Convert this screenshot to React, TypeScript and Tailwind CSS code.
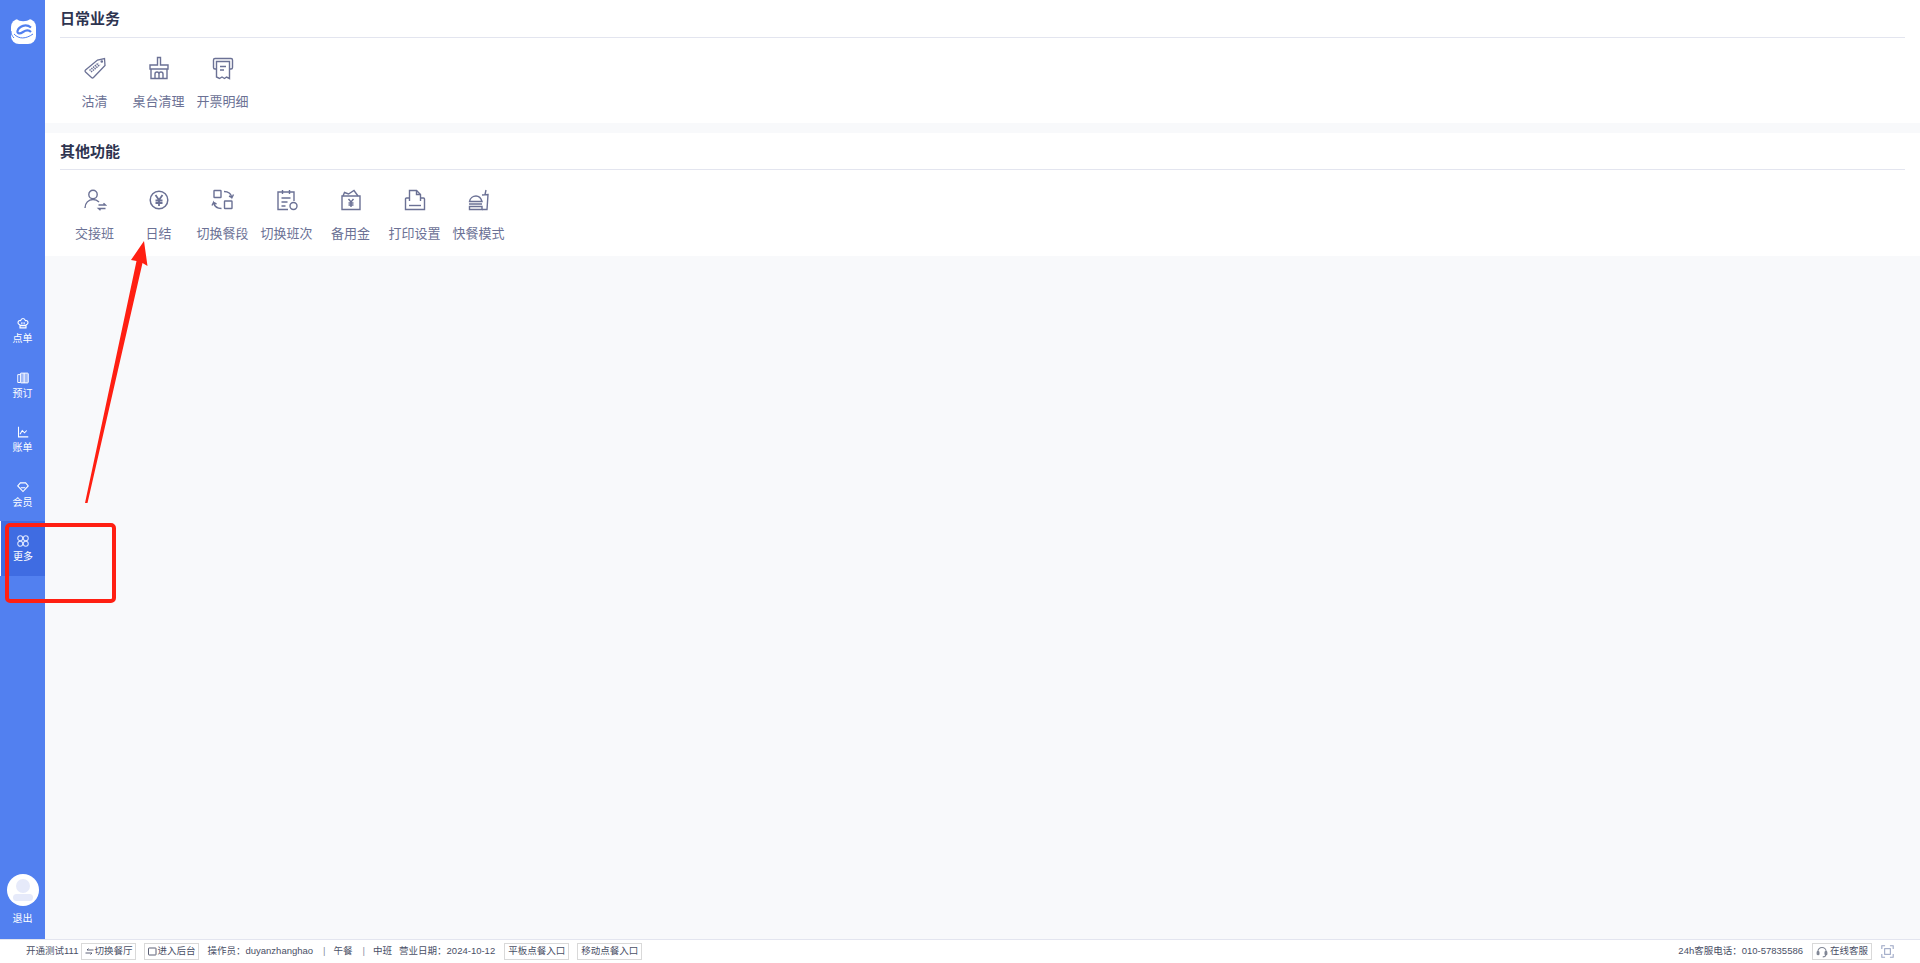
import type { ReactNode } from "react";

const font = "font-['Liberation_Sans','Noto_Sans_CJK_SC',sans-serif]";

function TagIcon() {
  return (
    <svg viewBox="0 0 24 24" className="h-6 w-6" fill="none" stroke="#6b7195" strokeWidth="1.3">
      <path d="M2.5 14 14.500 4l7-1.500.5 7L10.500 21.500a1.500 1.500 0 0 1-2 0l-6-5.500a1.300 1.300 0 0 1 0-2Z" />
      <path d="m6.500 14.500 9-7.500M8 16l9-7.500" strokeWidth="1.500" strokeDasharray="1.500 0.800" />
      <circle cx="18.800" cy="5.500" r="0.700" />
    </svg>
  );
}

function BroomIcon() {
  return (
    <svg viewBox="0 0 24 24" className="h-6 w-6" fill="none" stroke="#6b7195" strokeWidth="1.400">
      <path d="M10.500 1.500h3V9h7.500v4H3V9h7.500Z" />
      <path d="M4 13v9.500h16V13" />
      <path d="M8 22.500v-4.500a2 2 0 0 1 4 0v4.500M12 22.500v-4.500a2 2 0 0 1 4 0v4.500" />
    </svg>
  );
}

function ReceiptIcon() {
  return (
    <svg viewBox="0 0 24 24" className="h-6 w-6" fill="none" stroke="#6b7195" strokeWidth="1.400">
      <path d="M5.500 13H4a1.500 1.500 0 0 1-1.500-1.500V4A1.500 1.500 0 0 1 4 2.500h16A1.500 1.500 0 0 1 21.500 4v7.500A1.500 1.500 0 0 1 20 13h-1.500" />
      <path d="M5.500 5.500h13v17l-3-1.500-2 1.500-2.500-1.500-2.500 1.500-3-1.500Z" />
      <path d="M9 10.500h6M9 14h4" />
    </svg>
  );
}

function HandoverIcon() {
  return (
    <svg viewBox="0 0 24 24" className="h-6 w-6" fill="none" stroke="#6b7195" strokeWidth="1.400">
      <circle cx="10" cy="6.500" r="4.200" />
      <path d="M2 20c0-5 3.500-8.500 8-8.500 2.500 0 4.500 1 6 2.500" />
      <path d="M15.500 17h7l-2-1.800M22.500 20.500h-7l2 1.800" />
    </svg>
  );
}

function YenIcon() {
  return (
    <svg viewBox="0 0 24 24" className="h-6 w-6" fill="none" stroke="#6b7195" strokeWidth="1.500">
      <circle cx="12" cy="12" r="8.800" />
      <path d="m8.500 7 3.500 5 3.500-5M12 12v6M8.500 12.500h7M8.500 15h7" strokeWidth="1.800" />
    </svg>
  );
}

function SwitchIcon() {
  return (
    <svg viewBox="0 0 24 24" className="h-6 w-6" fill="none" stroke="#6b7195" strokeWidth="1.400">
      <rect x="3" y="2.500" width="7" height="7" rx="0.500" />
      <rect x="13.500" y="13" width="7.500" height="7.500" rx="0.500" />
      <path d="M13 3.500c4 0 7 2 8 6l1.500-3M21 9.500l-3-1.500" />
      <path d="M10.500 20.500c-4 0-7-2-8-6l-1.500 3M2.500 14.500l3 1.500" />
    </svg>
  );
}

function ShiftIcon() {
  return (
    <svg viewBox="0 0 24 24" className="h-6 w-6" fill="none" stroke="#6b7195" strokeWidth="1.400">
      <path d="M13 21.500H3V4h16v9" />
      <path d="M7.500 2v4M14.500 2v4M6.500 10h9M6.500 14h6M6.500 18h4" />
      <circle cx="18.500" cy="18" r="3.500" />
    </svg>
  );
}

function CashIcon() {
  return (
    <svg viewBox="0 0 24 24" className="h-6 w-6" fill="none" stroke="#6b7195" strokeWidth="1.400">
      <path d="M3 8h18v13.500H3Z" />
      <path d="m4 8 1.500-3.500 4 1.500L15 2.500 19 8" />
      <path d="m9.500 11 2.500 3 2.500-3M12 14v5M9.500 15h5M9.500 17h5" />
    </svg>
  );
}

function PrintIcon() {
  return (
    <svg viewBox="0 0 24 24" className="h-6 w-6" fill="none" stroke="#6b7195" strokeWidth="1.400">
      <path d="M6.500 13V2.500h7l4 4V13" />
      <path d="M13.500 2.500v4h4" />
      <path d="M6.500 10H3.500A1 1 0 0 0 2.500 11v10.500h19V11a1 1 0 0 0-1-1h-3" />
      <path d="M6 17.500h12" />
    </svg>
  );
}

function FastFoodIcon() {
  return (
    <svg viewBox="0 0 24 24" className="h-6 w-6" fill="none" stroke="#6b7195" strokeWidth="1.400">
      <path d="M2.500 13.500c.5-3.500 3.500-5.500 6.500-5.500s5 2 6 5.500Z" />
      <path d="M2 16h13M2.500 21.500h12.500v-3H2.500Z" />
      <path d="m15 7 6-.5-1 15h-5M18 6.500l1-4.500" />
    </svg>
  );
}

function ChefIcon() {
  return (
    <svg viewBox="0 0 16 16" className="h-3 w-3" fill="none" stroke="#fff" strokeWidth="1.500">
      <path d="M4 10.500C2 10 1 8.500 1.500 6.500 2 5 3.500 4.300 4.800 4.800 5.300 3 6.500 2 8 2s2.700 1 3.200 2.800c1.300-.5 2.800.2 3.300 1.700.5 2-.5 3.500-2.500 4V14.500H4Z" />
      <path d="M4 11.500h8M6.500 7v3M9.500 7v3" />
    </svg>
  );
}

function BookIcon() {
  return (
    <svg viewBox="0 0 16 16" className="h-3 w-3" fill="none" stroke="#fff" strokeWidth="1.300">
      <rect x="4.500" y="1.500" width="10.500" height="13" rx="1" fill="#fff" fillOpacity="0.45" />
      <path d="M4.500 3.500H1v10.500h3.500M9.500 1.500v13" />
    </svg>
  );
}

function ChartIcon() {
  return (
    <svg viewBox="0 0 16 16" className="h-3 w-3" fill="none" stroke="#fff" strokeWidth="1.400">
      <path d="M2 1v13.500h13" />
      <path d="m4 11 3-5 3 3 3-3" />
    </svg>
  );
}

function GemIcon() {
  return (
    <svg viewBox="0 0 16 16" className="h-3 w-3" fill="none" stroke="#fff" strokeWidth="1.400">
      <path d="M1 6.500 4.500 2.500h7l3.500 4L8 14Z" />
      <path d="M5 9h6" />
    </svg>
  );
}

function GridIcon() {
  return (
    <svg viewBox="0 0 16 16" className="h-3 w-3" fill="none" stroke="#dfe7ff" strokeWidth="1.400">
      <circle cx="4.300" cy="4.300" r="3.300" />
      <circle cx="11.700" cy="4.300" r="3.300" />
      <circle cx="4.300" cy="11.700" r="3.300" />
      <circle cx="11.700" cy="11.700" r="3.300" />
    </svg>
  );
}

function Logo() {
  return (
    <svg viewBox="0 0 25 25" className="h-[25px] w-[25px]" fill="none">
      <rect width="25" height="25" rx="8" fill="#fff" />
      <path d="M6 0c2 3 10 3 13 0Z" fill="#5280f0" />
      <path d="M20 8.500C15 4.500 8 7 6.500 12c-.5 3 2.500 3 5.500 1 3-2 6-2 8 0" stroke="#5280f0" strokeWidth="2.200" />
      <path d="M3 15c5 5.500 12 5 19 0" stroke="#5280f0" strokeWidth="1" />
      <path d="M0 12c0 3 1 5 3 7" stroke="#5280f0" strokeWidth="1" />
    </svg>
  );
}

function HeadsetIcon() {
  return (
    <svg viewBox="0 0 16 16" className="h-3 w-3" fill="none" stroke="#7f8594" strokeWidth="1.400">
      <path d="M2.500 9V7.500a5.500 5.500 0 0 1 11 0V9" />
      <rect x="1.500" y="7.500" width="2.500" height="4" rx="1" fill="#7f8594" />
      <rect x="12" y="7.500" width="2.500" height="4" rx="1" fill="#7f8594" />
      <path d="M13 11.500c0 2-1.500 3-4 3" />
    </svg>
  );
}

function SwapIcon() {
  return (
    <svg viewBox="0 0 9 9" className="h-[9px] w-[9px] shrink-0" fill="none" stroke="#4a4f66" strokeWidth="0.900">
      <path d="M8.500 3H2L3.500 1.500M.5 6H7L5.500 7.500" />
    </svg>
  );
}

function BoxIcon() {
  return (
    <svg viewBox="0 0 9 9" className="h-[9px] w-[9px] shrink-0" fill="none" stroke="#4a4f66" strokeWidth="0.900">
      <rect x="0.500" y="1" width="7.500" height="7" rx="0.500" />
    </svg>
  );
}

const sideItems = [
  { label: "点单", icon: <ChefIcon /> },
  { label: "预订", icon: <BookIcon /> },
  { label: "账单", icon: <ChartIcon /> },
  { label: "会员", icon: <GemIcon /> },
  { label: "更多", icon: <GridIcon />, active: true },
];

const dailyItems = [
  { label: "沽清", icon: <TagIcon /> },
  { label: "桌台清理", icon: <BroomIcon /> },
  { label: "开票明细", icon: <ReceiptIcon /> },
];

const otherItems = [
  { label: "交接班", icon: <HandoverIcon /> },
  { label: "日结", icon: <YenIcon /> },
  { label: "切换餐段", icon: <SwitchIcon /> },
  { label: "切换班次", icon: <ShiftIcon /> },
  { label: "备用金", icon: <CashIcon /> },
  { label: "打印设置", icon: <PrintIcon /> },
  { label: "快餐模式", icon: <FastFoodIcon /> },
];

function Section({
  title,
  items,
  headClass,
}: {
  title: string;
  items: { label: string; icon: ReactNode }[];
  headClass: string;
}) {
  return (
    <section className="h-[123px] bg-white pl-[15px] pr-[15px]">
      <h2 className={`${headClass} border-b border-[#e3e5ef] pt-[9px] text-[15px] leading-[19px] font-semibold text-[#2e3450]`}>
        {title}
      </h2>
      <div className="flex pl-[3px] pt-[18px]">
        {items.map((item) => (
          <div key={item.label} className="flex w-[64px] flex-col items-center">
            {item.icon}
            <span className="mt-[13px] -ml-[1px] text-[13px] leading-[18px] whitespace-nowrap text-[#6b7195]">
              {item.label}
            </span>
          </div>
        ))}
      </div>
    </section>
  );
}

function BarButton({ children }: { children: ReactNode }) {
  return (
    <span className="flex h-[17px] items-center border border-[#d9d9d9] bg-white px-[3px] whitespace-nowrap">
      {children}
    </span>
  );
}

export default function App() {
  return (
    <div className={`relative flex h-[963px] w-[1920px] flex-col overflow-hidden bg-[#f8f9fb] ${font}`}>
      <div className="flex min-h-0 flex-1">
        <aside className="flex w-[45px] flex-col bg-[#5280f0] text-white">
          <div className="flex justify-center pt-[19px] pl-[1px]">
            <Logo />
          </div>
          <nav className="mt-[259px] flex flex-col">
            {sideItems.map((item) => (
              <div
                key={item.label}
                className={`flex h-[54.5px] flex-col items-center pt-[14px] ${item.active ? "border-l border-white bg-[#3f6ce2]" : ""}`}
              >
                {item.icon}
                <span className="mt-[2px] text-[10px] leading-[16px]">{item.label}</span>
              </div>
            ))}
          </nav>
          <div className="mt-auto flex flex-col items-center pb-[12px]">
            <div className="flex h-[32px] w-[32px] flex-col items-center justify-center gap-[1px] overflow-hidden rounded-full bg-white">
              <span className="h-[14px] w-[14px] rounded-full bg-[#e6eafa]" />
              <span className="h-[7px] w-[20px] rounded-full bg-[#e6eafa]" />
            </div>
            <span className="mt-[5px] text-[10px] leading-[16px]">退出</span>
          </div>
        </aside>
        <main className="flex flex-1 flex-col gap-[10px]">
          <Section title="日常业务" items={dailyItems} headClass="h-[38px]" />
          <Section title="其他功能" items={otherItems} headClass="h-[37px]" />
        </main>
      </div>
      <footer className="flex h-[24px] items-center justify-between border-t border-[#e3e5ef] bg-white pl-[26px] pr-[26px] text-[9.5px] text-[#4a4f66]">
        <div className="flex items-center">
          <span>开通测试111</span>
          <span className="ml-[3px]">
            <BarButton>
              <SwapIcon />
              切换餐厅
            </BarButton>
          </span>
          <span className="ml-[8px]">
            <BarButton>
              <BoxIcon />
              进入后台
            </BarButton>
          </span>
          <span className="ml-[8px]">操作员：duyanzhanghao</span>
          <span className="ml-[10px] text-[#8a8fa3]">|</span>
          <span className="ml-[8px]">午餐</span>
          <span className="ml-[10px] text-[#8a8fa3]">|</span>
          <span className="ml-[8px]">中班</span>
          <span className="ml-[7px]">营业日期：2024-10-12</span>
          <span className="ml-[9px]">
            <BarButton>平板点餐入口</BarButton>
          </span>
          <span className="ml-[8px]">
            <BarButton>移动点餐入口</BarButton>
          </span>
        </div>
        <div className="flex items-center">
          <span>24h客服电话：010-57835586</span>
          <span className="ml-[9px] flex h-[17px] items-center gap-[2px] border border-[#d9d9d9] px-[3px]">
            <HeadsetIcon />
            在线客服
          </span>
          <svg viewBox="0 0 16 16" className="ml-[9px] h-[13px] w-[13px]" fill="none" stroke="#9aa5c4" strokeWidth="1.300">
            <path d="M1 5V1h4M11 1h4v4M15 11v4h-4M5 15H1v-4" />
            <rect x="4.500" y="4.500" width="7" height="7" />
          </svg>
        </div>
      </footer>

      {/* red annotation drawn over the page */}
      <div className="absolute left-[5px] top-[523px] h-[80px] w-[111px] rounded-[5px] border-[4px] border-[#ff1f12]" />
      <svg className="absolute left-0 top-0 h-[963px] w-[1920px]" viewBox="0 0 1920 963" fill="none">
        <path d="M144 241 147.500 266 142.500 263 87.500 503 85 503 136.500 261 131 260Z" fill="#ff1f12" />
      </svg>
    </div>
  );
}
